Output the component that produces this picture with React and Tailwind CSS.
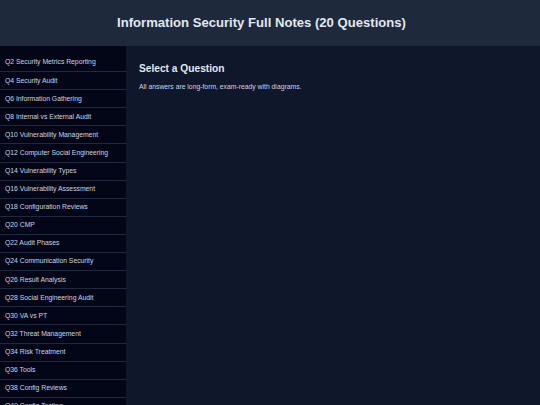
import React from "react";

const items = [
  "Q2 Security Metrics Reporting",
  "Q4 Security Audit",
  "Q6 Information Gathering",
  "Q8 Internal vs External Audit",
  "Q10 Vulnerability Management",
  "Q12 Computer Social Engineering",
  "Q14 Vulnerability Types",
  "Q16 Vulnerability Assessment",
  "Q18 Configuration Reviews",
  "Q20 CMP",
  "Q22 Audit Phases",
  "Q24 Communication Security",
  "Q26 Result Analysis",
  "Q28 Social Engineering Audit",
  "Q30 VA vs PT",
  "Q32 Threat Management",
  "Q34 Risk Treatment",
  "Q36 Tools",
  "Q38 Config Reviews",
  "Q40 Config Testing",
];

export default function App() {
  return (
    <div
      className="w-[540px] h-[405px] overflow-hidden flex flex-col bg-[#0f172a] text-[#e2e8f0]"
      style={{ fontFamily: '"Liberation Sans", Arial, sans-serif' }}
    >
      <header className="h-[46px] shrink-0 bg-[#1e293b] flex items-center justify-center pr-[17px]">
        <h1 className="text-[13.1px] font-bold text-[#e2e8f0]">
          Information Security Full Notes (20 Questions)
        </h1>
      </header>
      <div className="flex flex-1 min-h-0">
        <aside className="w-[126px] shrink-0 bg-[#020617] pt-[8px] overflow-hidden">
          {items.map((t) => (
            <div
              key={t}
              className="h-[18.1px] flex items-center px-[5px] border-b border-[#1e293b] text-[6.8px] text-[#cbd5e1] whitespace-nowrap"
            >
              {t}
            </div>
          ))}
        </aside>
        <main className="flex-1 pl-[13px] pt-[16px]">
          <h2 className="text-[10.2px] font-bold text-[#e2e8f0] leading-[14px]">
            Select a Question
          </h2>
          <p className="mt-[6px] text-[6.8px] text-[#cbd5e1]">
            All answers are long-form, exam-ready with diagrams.
          </p>
        </main>
      </div>
    </div>
  );
}
